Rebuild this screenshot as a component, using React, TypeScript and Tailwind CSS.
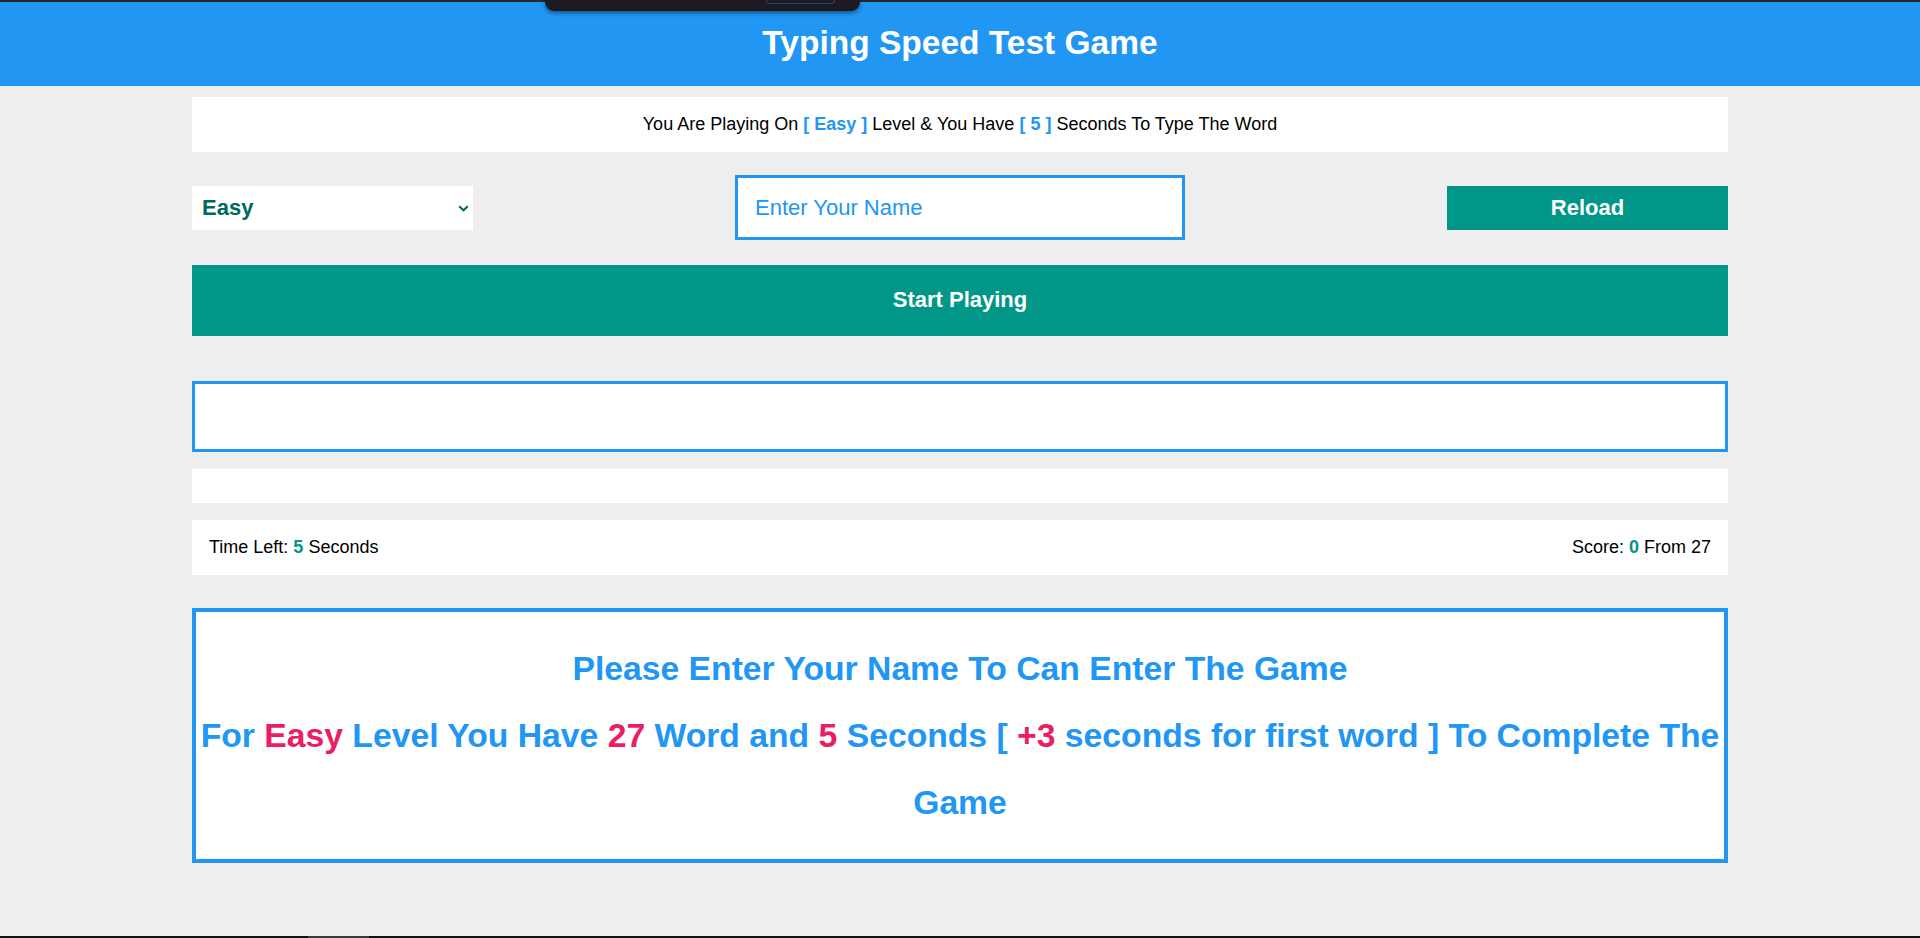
import React from "react";

export default function App() {
  return (
    <div className="relative min-h-screen bg-[#eeeeee] font-['Liberation_Sans',Arial,sans-serif] text-black">
      {/* screen artifacts */}
      <div className="fixed left-0 right-0 top-0 h-[2px] bg-[#25272b] z-20" />
      <div className="fixed top-0 left-[545px] w-[315px] h-[11px] rounded-b-[9px] bg-[#1c1b22] shadow-[0_2px_4px_rgba(0,0,0,0.45)] z-30">
        <div className="absolute top-0 left-[221px] w-[69px] h-[4px] rounded-b-[4px] border border-t-0 border-[#3b3a6b]" />
      </div>
      <div className="fixed left-0 right-0 bottom-0 h-[2px] bg-[#111111] z-20">
        <div className="ml-[308px] w-[61px] h-full bg-[#3a3a3a]" />
      </div>

      <header className="h-[86px] bg-[#2196f3] flex items-center justify-center">
        <h1 className="text-white font-bold text-[33.5px] leading-none">Typing Speed Test Game</h1>
      </header>

      <main className="w-[80%] mx-auto pt-[11px] pb-[40px]">
        <div className="bg-white h-[55px] flex items-center justify-center text-[18px]">
          <span>
            You Are Playing On{" "}
            <span className="font-bold text-[#2196f3]">[ Easy ]</span> Level &amp; You Have{" "}
            <span className="font-bold text-[#2196f3]">[ 5 ]</span> Seconds To Type The Word
          </span>
        </div>

        <div className="mt-[23px] flex items-center justify-between">
          <div className="relative w-[281px] h-[44px] bg-white">
            <select
              defaultValue="Easy"
              className="appearance-none w-full h-full bg-white pl-[10px] pr-[20px] text-[22px] font-bold text-[#00695c] outline-none border-0"
            >
              <option>Easy</option>
              <option>Normal</option>
              <option>Hard</option>
            </select>
            <svg
              className="pointer-events-none absolute right-[4px] top-[19px]"
              width="11"
              height="7"
              viewBox="0 0 11 7"
              fill="none"
            >
              <path d="M1.2 1.2 L5.5 5.3 L9.8 1.2" stroke="#00695c" strokeWidth="2" />
            </svg>
          </div>

          <input
            type="text"
            placeholder="Enter Your Name"
            className="w-[450px] h-[65px] bg-white border-[3px] border-[#2196f3] pl-[17px] text-[22px] text-[#2196f3] placeholder:text-[#2196f3] outline-none"
          />

          <button className="w-[281px] h-[44px] bg-[#009688] text-white font-bold text-[22px]">
            Reload
          </button>
        </div>

        <button className="mt-[25px] w-full h-[71px] bg-[#009688] text-white font-bold text-[22px] leading-[22px] pb-[2px]">
          Start Playing
        </button>

        <div className="mt-[45px] h-[71px] bg-white border-[3px] border-[#2196f3]" />

        <div className="mt-[17px] h-[34px] bg-white" />

        <div className="mt-[17px] h-[55px] bg-white flex items-center justify-between px-[17px] text-[18px]">
          <span>
            Time Left: <span className="font-bold text-[#009688]">5</span> Seconds
          </span>
          <span>
            Score: <span className="font-bold text-[#009688]">0</span> From 27
          </span>
        </div>

        <div className="mt-[33px] bg-white border-4 border-[#2196f3] py-[23px] text-center font-bold text-[#2196f3] text-[33.7px] leading-[67px]">
          <div>Please Enter Your Name To Can Enter The Game</div>
          <div>
            For <span className="text-[#e91e63]">Easy</span> Level You Have{" "}
            <span className="text-[#e91e63]">27</span> Word and{" "}
            <span className="text-[#e91e63]">5</span> Seconds [{" "}
            <span className="text-[#e91e63]">+3</span> seconds for first word ] To Complete The Game
          </div>
        </div>
      </main>
    </div>
  );
}
